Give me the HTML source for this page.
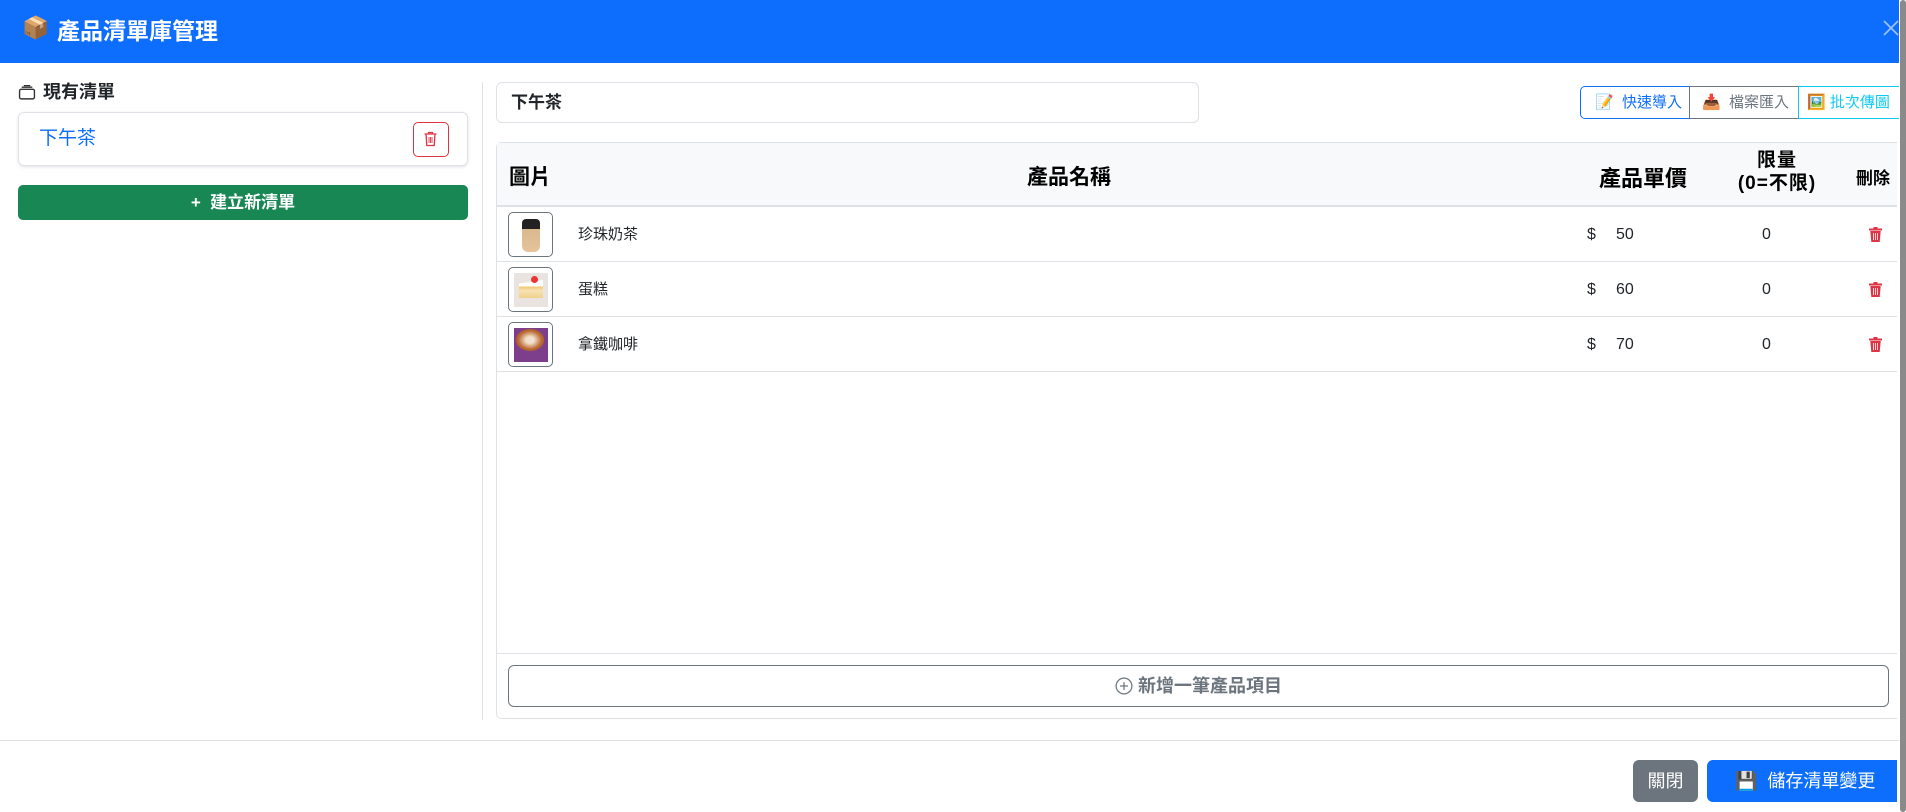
<!DOCTYPE html>
<html><head><meta charset="utf-8"><style>
*{box-sizing:border-box;margin:0;padding:0}
body{width:1906px;height:812px;overflow:hidden;background:#fff;font-family:"Liberation Sans","Noto Sans CJK TC",sans-serif;color:#212529;position:relative}
.abs{position:absolute}
.hdr{left:0;top:0;width:1899px;height:63px;background:#0d6efd}
.title{left:57px;top:13px;color:#fff;font-size:23px;font-weight:bold;line-height:36px}
.th{position:absolute;font-weight:bold;font-size:21px;color:#000}
.row{position:absolute;left:497px;width:1400px;height:55px;border-bottom:1px solid #dee2e6}
.thumb{position:absolute;left:11px;top:5px;width:45px;height:45px;border:1px solid #6c757d;border-radius:5px;overflow:hidden;background:#fff}
.nm{position:absolute;left:81px;top:0;line-height:55px;font-size:15px}
.dl{position:absolute;left:1090px;line-height:55px;font-size:16px}
.pr{position:absolute;left:1119px;line-height:55px;font-size:16px}
.q{position:absolute;left:1265px;line-height:55px;font-size:16px}
.tr{position:absolute;left:1371px;top:19px}
</style></head><body>
<div class="abs hdr"></div>
<div class="abs" style="left:22px;top:15px;font-size:22px">📦</div>
<div class="abs title">產品清單庫管理</div>
<svg class="abs" style="left:1882px;top:19px" width="18" height="18" viewBox="0 0 18 18"><path d="M2 2L16 16M16 2L2 16" stroke="#9ec5fe" stroke-width="1.6"/></svg>
<div class="abs" style="left:1900px;top:0;width:6px;height:812px;background:#8a8a8a;border-radius:3px"></div>

<!-- left -->
<svg class="abs" style="left:18px;top:84px" width="18" height="17" viewBox="0 0 16 16"><rect x="1" y="5" width="14" height="9" rx="1.5" fill="none" stroke="#333" stroke-width="1.3"/><path d="M3 3h10M5 1.5h6" stroke="#333" stroke-width="1.2"/></svg>
<div class="abs" style="left:43px;top:80px;font-size:18px;font-weight:bold;line-height:24px">現有清單</div>
<div class="abs" style="left:18px;top:112px;width:450px;height:54px;border:1px solid #dee2e6;border-radius:6px;box-shadow:0 1px 3px rgba(0,0,0,.12)"></div>
<div class="abs" style="left:39px;top:127px;font-size:19px;color:#0d6efd;line-height:24px">下午茶</div>
<div class="abs" style="left:413px;top:122px;width:36px;height:35px;border:1px solid #dc3545;border-radius:5px"></div>
<svg class="abs" style="left:423px;top:131px" width="15" height="16" viewBox="0 0 15 16"><path d="M1.5 3h12M5.5 3V1.5h4V3M3 3l.8 11.5h7.4L12 3" fill="none" stroke="#dc3545" stroke-width="1.3"/><path d="M6 6v6M7.5 6v6M9 6v6" stroke="#dc3545" stroke-width=".9"/></svg>
<div class="abs" style="left:18px;top:185px;width:450px;height:35px;background:#198754;border-radius:5px;color:#fff;font-weight:bold;font-size:17px;text-align:center;line-height:35px">+&nbsp; 建立新清單</div>
<div class="abs" style="left:482px;top:82px;width:1px;height:638px;background:#dee2e6"></div>

<!-- right top -->
<div class="abs" style="left:496px;top:82px;width:703px;height:41px;border:1px solid #dee2e6;border-radius:6px;font-weight:bold;font-size:17px;line-height:39px;padding-left:14px">下午茶</div>
<div class="abs" style="left:1580px;top:86px;width:110px;height:33px;border:1px solid #0d6efd;border-radius:5px 0 0 5px;color:#0d6efd;font-size:15px;line-height:31px;padding-left:14px">📝&nbsp; 快速導入</div>
<div class="abs" style="left:1689px;top:86px;width:110px;height:33px;border:1px solid #6c757d;color:#6c757d;font-size:15px;line-height:31px;padding-left:12px">📥&nbsp; 檔案匯入</div>
<div class="abs" style="left:1798px;top:86px;width:101px;height:33px;border:1px solid #0dcaf0;border-right:none;color:#0dcaf0;font-size:15px;line-height:31px;padding-left:8px;white-space:nowrap;overflow:hidden">🖼️ 批次傳圖</div>

<!-- table -->
<div class="abs" style="left:496px;top:142px;width:1401px;height:577px;border:1px solid #dee2e6;border-right:none;border-radius:5px 0 0 5px"></div>
<div class="abs" style="left:497px;top:143px;width:1400px;height:64px;background:#f8f9fa;border-bottom:2px solid #dee2e6"></div>
<div class="th" style="left:509px;top:161px">圖片</div>
<div class="th" style="left:1027px;top:161px">產品名稱</div>
<div class="th" style="left:1599px;top:161px;font-size:22px">產品單價</div>
<div class="th" style="left:1697px;top:149px;width:160px;text-align:center;font-size:19px;line-height:23px;letter-spacing:1px">限量<br>(0=不限)</div>
<div class="th" style="left:1856px;top:164px;font-size:17px">刪除</div>

<div class="row" style="top:207px">
<div class="thumb"><div style="position:absolute;left:13px;top:6px;width:18px;height:33px;background:linear-gradient(#222 0,#222 30%,#d9b890 30%,#e6c39a);border-radius:4px 4px 6px 6px"></div></div>
<div class="nm">珍珠奶茶</div><div class="dl">$</div><div class="pr">50</div><div class="q">0</div>
<svg class="tr" width="15" height="17" viewBox="0 0 15 17"><path d="M1 2.5h13v2H1zM5.5 1h4v1.5h-4zM2.3 5h10.4l-1 11H3.3z" fill="#dc3545"/><path d="M5.5 7v7M7.5 7v7M9.5 7v7" stroke="#fff" stroke-width=".8"/></svg>
</div>
<div class="row" style="top:262px">
<div class="thumb"><div style="position:absolute;left:5px;top:5px;width:34px;height:34px;background:#e9e4df"></div><div style="position:absolute;left:10px;top:12px;width:24px;height:18px;background:linear-gradient(#fff 0,#fff 35%,#f2c36a 35%,#f7e3b5 60%,#f1d08a 100%);clip-path:polygon(0 20%,100% 0,100% 100%,0 100%)"></div><div style="position:absolute;left:22px;top:8px;width:7px;height:7px;background:#e33;border-radius:50%"></div></div>
<div class="nm">蛋糕</div><div class="dl">$</div><div class="pr">60</div><div class="q">0</div>
<svg class="tr" width="15" height="17" viewBox="0 0 15 17"><path d="M1 2.5h13v2H1zM5.5 1h4v1.5h-4zM2.3 5h10.4l-1 11H3.3z" fill="#dc3545"/><path d="M5.5 7v7M7.5 7v7M9.5 7v7" stroke="#fff" stroke-width=".8"/></svg>
</div>
<div class="row" style="top:317px">
<div class="thumb"><div style="position:absolute;left:5px;top:5px;width:34px;height:34px;background:#7d3f8c"></div><div style="position:absolute;left:7px;top:6px;width:28px;height:22px;background:radial-gradient(#f3e1cf 20%,#b8672e 60%,#a0522d);border-radius:50%"></div></div>
<div class="nm">拿鐵咖啡</div><div class="dl">$</div><div class="pr">70</div><div class="q">0</div>
<svg class="tr" width="15" height="17" viewBox="0 0 15 17"><path d="M1 2.5h13v2H1zM5.5 1h4v1.5h-4zM2.3 5h10.4l-1 11H3.3z" fill="#dc3545"/><path d="M5.5 7v7M7.5 7v7M9.5 7v7" stroke="#fff" stroke-width=".8"/></svg>
</div>

<div class="abs" style="left:497px;top:653px;width:1400px;height:1px;background:#dee2e6"></div>
<div class="abs" style="left:508px;top:665px;width:1381px;height:42px;border:1px solid #6c757d;border-radius:6px;color:#6c757d;font-weight:bold;font-size:18px;text-align:center;line-height:40px"><svg width="18" height="18" viewBox="0 0 16 16" style="vertical-align:-3px"><circle cx="8" cy="8" r="7" fill="none" stroke="#6c757d" stroke-width="1.1"/><path d="M8 4.5v7M4.5 8h7" stroke="#6c757d" stroke-width="1.1"/></svg> 新增一筆產品項目</div>

<!-- footer -->
<div class="abs" style="left:0;top:740px;width:1899px;height:1px;background:#dee2e6"></div>
<div class="abs" style="left:1633px;top:760px;width:65px;height:42px;background:#6c757d;border-radius:6px;color:#fff;font-size:18px;text-align:center;line-height:42px">關閉</div>
<div class="abs" style="left:1707px;top:760px;width:190px;height:42px;background:#0d6efd;border-radius:6px 0 0 6px;color:#fff;font-size:18px;line-height:42px;padding-left:28px">💾&nbsp; 儲存清單變更</div>
</body></html>
